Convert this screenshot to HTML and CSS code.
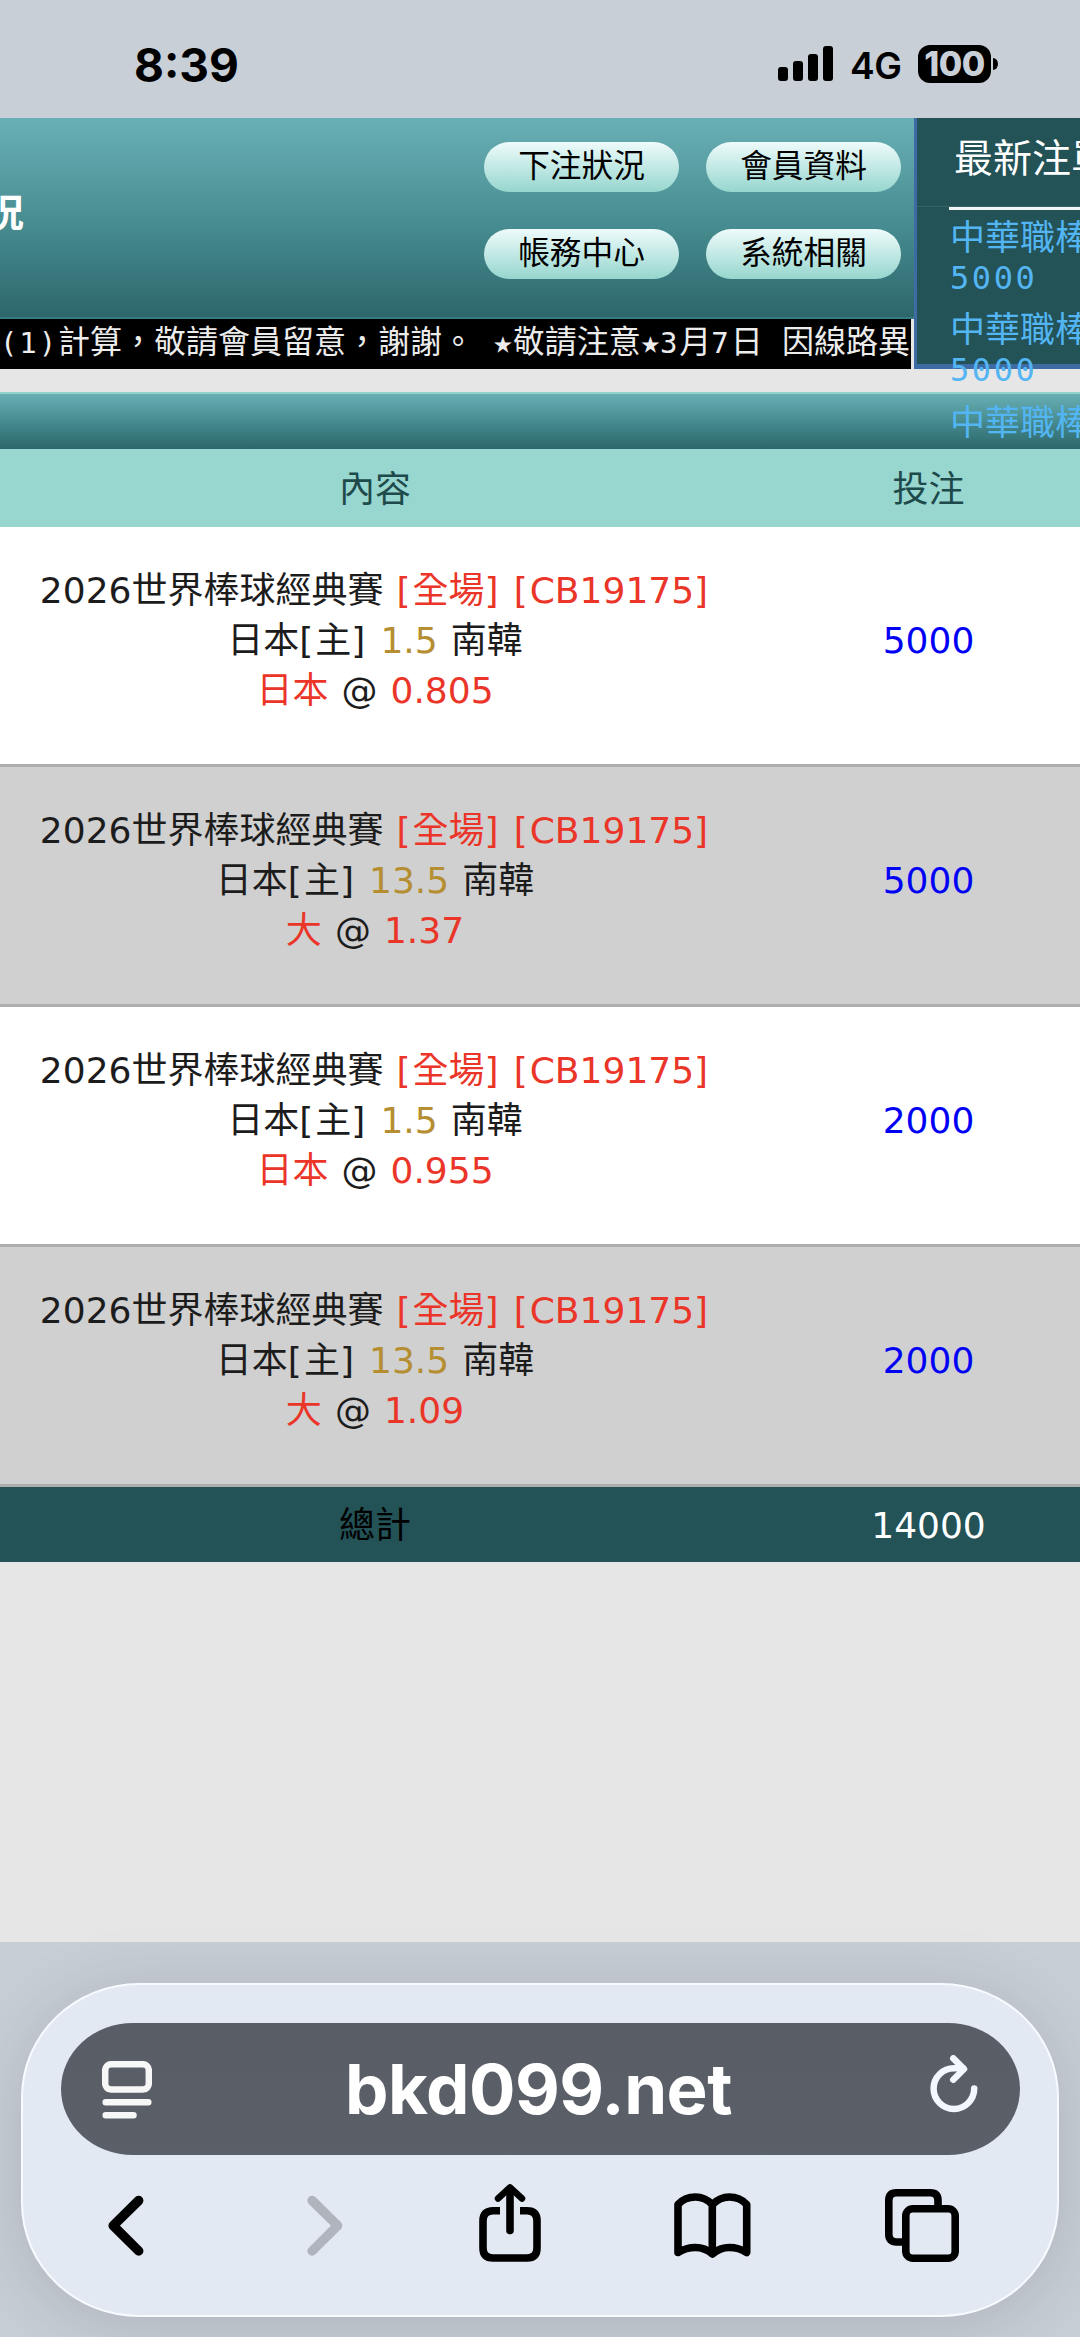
FILE: index.html
```html
<!DOCTYPE html>
<html lang="zh-Hant">
  <head>
	<meta charset="UTF-8">
	<title>下注狀況</title>
	<link rel="stylesheet" href="styles.css">
  </head>
  <body>

	<div class="status-bar">
	  <div class="clock">8:39</div>
	  <div class="status-right">
		<svg class="signal" viewBox="0 0 56 36">
		  <rect x="0" y="21" width="10" height="14" rx="3"/>
		  <rect x="15" y="15" width="10" height="20" rx="3"/>
		  <rect x="30" y="8" width="10" height="27" rx="3"/>
		  <rect x="45" y="0" width="10" height="35" rx="3"/>
		</svg>
		<span class="network">4G</span>
		<span class="battery">100</span>
		<span class="battery-tip"></span>
	  </div>
	</div>

	<div class="header">
	  <div class="header-left">
		<div class="banner">
		  <div class="page-name">況</div>
		  <div class="menu">
			<a>下注狀況</a>
			<a>會員資料</a>
			<a>帳務中心</a>
			<a>系統相關</a>
		  </div>
		</div>
		<div class="marquee"><span class="num">(1)</span>計算，敬請會員留意，謝謝。 ★敬請注意★<span class="num">3</span>月<span class="num">7</span>日 因線路異</div>
	  </div>
	  <div class="latest">
		<div class="latest-title">最新注單</div>
		<div class="latest-list">
		  <div class="latest-item">中華職棒<b>5000</b></div>
		  <div class="latest-item">中華職棒<b>5000</b></div>
		  <div class="latest-item">中華職棒</div>
		</div>
	  </div>
	</div>

	<div class="bets">
	  <div class="bets-bar"></div>
	  <div class="row head">
		<div class="content">內容</div>
		<div class="stake">投注</div>
	  </div>
	  <div class="row">
		<div class="content">
		  2026世界棒球經典賽 <span class="red"><i>[</i>全場<i>]</i> <i>[</i>CB19175<i>]</i></span><br>
		  日本<i>[</i>主<i>]</i> <span class="gold">1.5</span> 南韓<br>
		  <span class="red">日本</span> @ <span class="red">0.805</span>
		</div>
		<div class="stake">5000</div>
	  </div>
	  <div class="row">
		<div class="content">
		  2026世界棒球經典賽 <span class="red"><i>[</i>全場<i>]</i> <i>[</i>CB19175<i>]</i></span><br>
		  日本<i>[</i>主<i>]</i> <span class="gold">13.5</span> 南韓<br>
		  <span class="red">大</span> @ <span class="red">1.37</span>
		</div>
		<div class="stake">5000</div>
	  </div>
	  <div class="row">
		<div class="content">
		  2026世界棒球經典賽 <span class="red"><i>[</i>全場<i>]</i> <i>[</i>CB19175<i>]</i></span><br>
		  日本<i>[</i>主<i>]</i> <span class="gold">1.5</span> 南韓<br>
		  <span class="red">日本</span> @ <span class="red">0.955</span>
		</div>
		<div class="stake">2000</div>
	  </div>
	  <div class="row">
		<div class="content">
		  2026世界棒球經典賽 <span class="red"><i>[</i>全場<i>]</i> <i>[</i>CB19175<i>]</i></span><br>
		  日本<i>[</i>主<i>]</i> <span class="gold">13.5</span> 南韓<br>
		  <span class="red">大</span> @ <span class="red">1.09</span>
		</div>
		<div class="stake">2000</div>
	  </div>
	  <div class="row total">
		<div class="content">總計</div>
		<div class="stake">14000</div>
	  </div>
	</div>

	<div class="browser">
	  <div class="panel">
		<div class="address">
		  <svg class="reader" viewBox="0 0 50 58">
			<rect x="3.2" y="3.2" width="43.6" height="25.4" rx="6"/>
			<path d="M3.7 41.3H46.3M3.7 54.3H31.5"/>
		  </svg>
		  <span class="url">bkd099.net</span>
		  <svg class="reload" viewBox="0 0 50 60">
			<path d="M44.2 33.6A20.3 20.3 0 1 1 23.9 13.3H33"/>
			<path d="M23.3 3.4L34 14L23.3 24.7"/>
		  </svg>
		</div>
		<div class="nav">
		  <svg class="back" viewBox="0 0 36 84"><path d="M30.7 16.5L5.2 41.7L30.7 67"/></svg>
		  <svg class="forward" viewBox="0 0 36 84"><path d="M5.1 16.5L30.6 41.7L5.1 67"/></svg>
		  <svg class="share" viewBox="0 0 62 84">
			<path class="cut" d="M21 26.7H14Q4 26.7 4 36.7V64Q4 74 14 74H48Q58 74 58 64V36.7Q58 26.7 48 26.7H41"/>
			<path d="M31 6V46.5"/>
			<path d="M19 14.5L31 3.5L43 14.5" class="tip"/>
		  </svg>
		  <svg class="book" viewBox="0 0 77 84">
			<path d="M38.3 20.5Q31 13 21.5 13Q10.5 13 4 20.5V68.5Q12 63.5 21.5 63.5Q31 63.5 38.3 70Q46 63.5 55.2 63.5Q65 63.5 72.7 68.5V20.5Q66 13 55.2 13Q46 13 38.3 20.5V69"/>
		  </svg>
		  <svg class="tabs" viewBox="0 0 74 84">
			<path class="cut" d="M17 58H11.5Q3.8 58 3.8 50.3V16.5Q3.8 8.8 11.5 8.8H45.3Q53 8.8 53 16.5V22"/>
			<rect x="20.8" y="24.8" width="49.4" height="49.4" rx="7"/>
		  </svg>
		</div>
	  </div>
	</div>

  </body>
</html>
```
FILE: styles.css
```css
* { box-sizing: border-box; }

body {
  margin: 0;
  width: 1080px;
  height: 2337px;
  overflow: hidden;
  display: flex;
  flex-direction: column;
  background: #e6e6e6;
  font-family: "DejaVu Sans", "Noto Sans CJK TC", sans-serif;
  color: #1c1c1c;
}

/* STATUS BAR */
.status-bar {
  height: 118px;
  flex: none;
  background: #c9cfd7;
  display: flex;
  justify-content: space-between;
  padding: 40px 82px 0 134px;
  font-family: Inter, sans-serif;
  color: #000;
}

.clock {
  font-size: 46px;
  font-weight: 700;
  line-height: 50px;
}

.status-right {
  display: flex;
  align-items: center;
  height: 47px;
}

.signal {
  width: 56px;
  height: 36px;
}

.network {
  font-size: 37px;
  font-weight: 600;
  line-height: 46px;
  width: 52px;
  margin: 5px 16px 0 16px;
  letter-spacing: -0.5px;
}

.battery {
  width: 73px;
  height: 38px;
  border-radius: 12px;
  background: #000;
  color: #c9cfd7;
  font-size: 34px;
  font-weight: 800;
  line-height: 38px;
  letter-spacing: -0.5px;
  text-align: center;
}

.battery-tip {
  width: 5px;
  height: 12px;
  margin-left: 2px;
  background: #000;
  border-radius: 0 5px 5px 0 / 0 6px 6px 0;
}

/* HEADER */
.header {
  display: flex;
  height: 251px;
  flex: none;
}

.header-left {
  width: 914px;
  flex: none;
}

.banner {
  height: 201px;
  display: flex;
  justify-content: space-between;
  background: linear-gradient(#69b0b6, #468b8f 55%, #2c676b);
  border-bottom: 2px solid #347a7f;
}

.page-name {
  width: 24px;
  overflow: hidden;
  display: flex;
  justify-content: flex-end;
  padding-top: 68px;
  font-size: 38px;
  font-weight: bold;
  line-height: 54px;
  color: #fff;
}

.menu {
  display: grid;
  grid-template-columns: 195px 195px;
  grid-auto-rows: 50px;
  gap: 37px 27px;
  padding: 24px 13px 0 0;
}

.menu a {
  border-radius: 25px;
  background: linear-gradient(#eefbfb, #96d6ce);
  color: #000;
  font-size: 31.7px;
  line-height: 48px;
  text-align: center;
}

.marquee {
  height: 50px;
  width: 911px;
  background: #000;
  color: #ececec;
  font-family: "DejaVu Sans Mono", "Noto Sans CJK TC", monospace;
  font-size: 32px;
  line-height: 46px;
  white-space: nowrap;
  overflow: hidden;
}

.marquee .num {
  font-size: 29px;
  letter-spacing: 1.9px;
}

/* latest bets, the list runs out below its box */
.latest {
  width: 166px;
  flex: none;
  position: relative;
  background: #235257;
  border-left: 3px solid #3d6ca5;
  border-bottom: 5px solid #3d6ca5;
  font-family: "DejaVu Sans Mono", "Noto Sans CJK TC", monospace;
  white-space: nowrap;
}

.latest-title {
  height: 89px;
  padding-left: 37px;
  border-bottom: 1px solid #356367;
  color: #fff;
  font-size: 39px;
  line-height: 81px;
}

.latest-list {
  margin-left: 32px;
  border-top: 3px solid #f4f4f4;
  padding-top: 9px;
  color: #54b5f3;
}

.latest-item {
  height: 92.3px;
  padding-left: 1px;
  font-size: 35px;
  line-height: 39.5px;
}

.latest-item b {
  display: block;
  font-size: 32px;
  font-weight: normal;
  letter-spacing: 2.6px;
}

/* BET TABLE */
.bets {
  margin-top: 23px;
  border-top: 2px solid #8fd3cb;
  font-size: 36px;
  line-height: 50px;
  text-align: center;
}

.bets-bar {
  height: 55px;
  background: linear-gradient(#68afb5, #468b8f 50%, #2c676b);
}

.row {
  display: flex;
  align-items: center;
  width: 1107px;
  height: 240px;
  padding-bottom: 10px;
  border-bottom: 3px solid #aeaeae;
  background: #fff;
}

.row:nth-child(4), .row:nth-child(6) { background: #d0d0d0; }

.content {
  width: 750px;
  word-spacing: 1.6px;
}

.content i {
  font-style: normal;
  letter-spacing: 2px;
}

.stake {
  width: 357px;
  color: #0000f5;
}

.row.head {
  height: 78px;
  padding: 3px 0 0;
  border: none;
  background: #97d7cf;
  color: #1f4a4c;
}

.row.head .stake { color: #1f4a4c; }

.row.total {
  height: 75px;
  padding: 2px 0 0;
  border: none;
  background: #235257;
  color: #000;
}

.row.total .stake { color: #fff; }

.red { color: #ea3528; }
.gold { color: #b48e31; }

/* BROWSER BAR */
.browser {
  height: 395px;
  flex: none;
  margin-top: auto;
  padding: 41px 21px 20px;
  background: #c7ced6;
}

.panel {
  height: 334px;
  border-radius: 118px / 114px;
  border: 2px solid #f7fbff;
  background: #e3e9f2;
  box-shadow: 0 8px 70px rgba(0,0,0,0.13);
  padding: 38px 37px 0 38px;
}

.address {
  height: 132px;
  border-radius: 72px / 66px;
  background: linear-gradient(#595d66, #5a6068);
  display: flex;
  align-items: center;
  justify-content: space-between;
  padding: 0 40px 0 41px;
}

svg {
  display: block;
  flex: none;
  fill: none;
  stroke: #000;
  stroke-width: 7.6;
  stroke-linecap: round;
  stroke-linejoin: round;
}

.signal {
  fill: #000;
  stroke: none;
}

.reader {
  width: 50px;
  height: 58px;
  margin-top: 1px;
  stroke: #f7f7f7;
  stroke-width: 6.5;
}

.reload {
  width: 50px;
  height: 60px;
  margin-top: -9px;
  stroke: #f3f7ff;
  stroke-width: 6.5;
}

.url {
  color: #fff;
  font-family: Inter, sans-serif;
  font-size: 69px;
  font-weight: 700;
  line-height: 80px;
  letter-spacing: -0.5px;
  margin-right: 5px;
}

.nav {
  display: flex;
  padding: 29px 0 0 47px;
}

.nav svg { height: 84px; }

.back {
  width: 36px;
  stroke-width: 9.5;
}

.forward {
  width: 36px;
  margin-left: 163px;
  stroke: #b0b4bd;
  stroke-width: 9.5;
}

.share {
  width: 62px;
  margin-left: 136px;
}

.share .tip { stroke-width: 6.5; }
.nav .cut { stroke-linecap: butt; }

.book {
  width: 77px;
  margin-left: 133px;
}

.tabs {
  width: 74px;
  margin-left: 134px;
}
```
